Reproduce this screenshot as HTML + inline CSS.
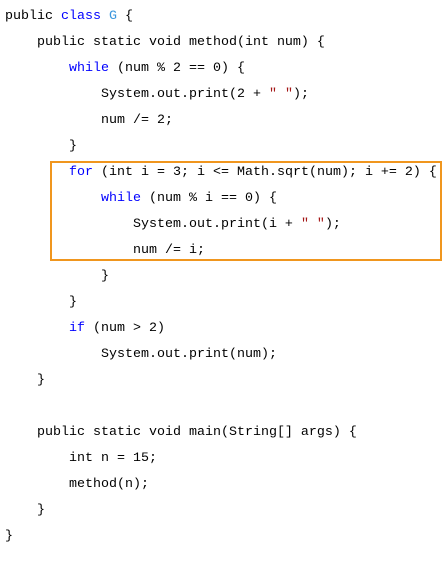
<!DOCTYPE html>
<html><head><style>
html,body{margin:0;padding:0;background:#fff;width:442px;height:582px;overflow:hidden}
pre{margin:0;position:absolute;left:5px;top:4px;font-family:"Liberation Mono","DejaVu Sans Mono",monospace;font-size:13.33px;line-height:26px;color:#000}
.k{color:#0000ff}.c{color:#3a96dd}.s{color:#a31515}
.box{position:absolute;left:50px;top:161px;width:388px;height:96px;border:2px solid #f0961e}
</style></head><body>
<div class="box"></div>
<pre>public <span class="k">class</span> <span class="c">G</span> {
    public static void method(int num) {
        <span class="k">while</span> (num % 2 == 0) {
            System.out.print(2 + <span class="s">" "</span>);
            num /= 2;
        }
        <span class="k">for</span> (int i = 3; i &lt;= Math.sqrt(num); i += 2) {
            <span class="k">while</span> (num % i == 0) {
                System.out.print(i + <span class="s">" "</span>);
                num /= i;
            }
        }
        <span class="k">if</span> (num &gt; 2)
            System.out.print(num);
    }

    public static void main(String[] args) {
        int n = 15;
        method(n);
    }
}</pre>
</body></html>
